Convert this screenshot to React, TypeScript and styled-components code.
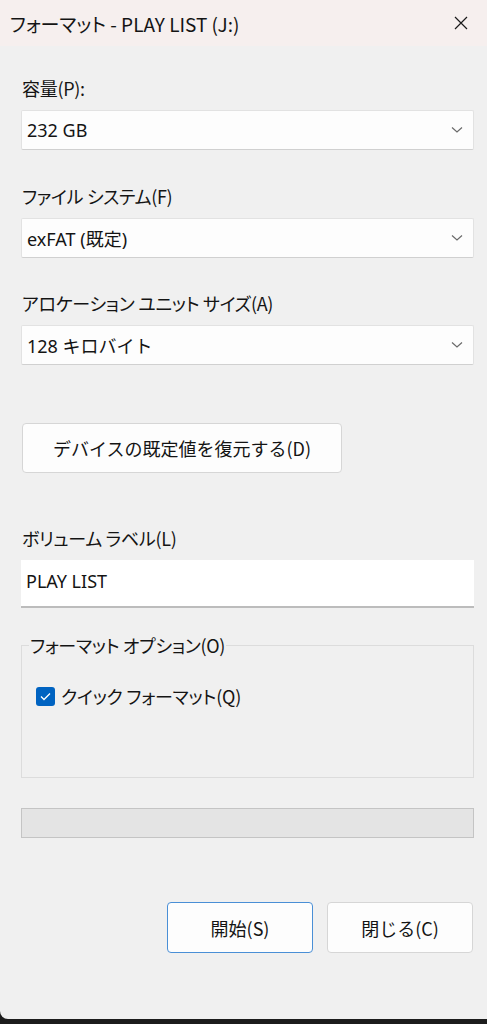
import React from "react";
import styled, { createGlobalStyle } from "styled-components";

const Global = createGlobalStyle`
  html, body { margin: 0; padding: 0; background: #1c1c1c; }
  body { font-family: "Noto Sans", "Noto Sans CJK JP", sans-serif; }
  * { box-sizing: border-box; }
`;

const Window = styled.div`
  width: 487px;
  height: 1019px;
  background: #f0f0f0;
  border-bottom-left-radius: 8px;
  display: flex;
  flex-direction: column;
  color: #141414;
  font-size: 18px;
`;

const TitleBar = styled.div`
  height: 46px;
  background: #f6efee;
  display: flex;
  align-items: center;
  justify-content: space-between;
  padding: 0 19px 0 10px;
`;

const Title = styled.span`
  font-family: "Noto Sans CJK JP", sans-serif;
  font-feature-settings: "palt";
  font-size: 19px;
`;

const Content = styled.div`
  display: flex;
  flex-direction: column;
  padding: 0 13px 0 21px;
`;

const Label = styled.div<{ $top: number }>`
  margin-top: ${(p) => p.$top}px;
  line-height: 24px;
  height: 24px;
  padding-left: 1px;
  font-family: "Noto Sans CJK JP", sans-serif;
  font-feature-settings: "palt";
  letter-spacing: -0.3px;
`;

const Select = styled.div`
  margin-top: 10px;
  height: 40px;
  background: #fdfdfd;
  border: 1px solid #e2e2e2;
  border-bottom-color: #d0d0d0;
  border-radius: 2px;
  display: flex;
  align-items: center;
  justify-content: space-between;
  padding: 0 10px 0 5px;
  font-family: "Noto Sans", "Noto Sans CJK JP", sans-serif;
`;

const Chevron = () => (
  <svg width="12" height="8" viewBox="0 0 12 8">
    <path d="M1 1.5 L6 6 L11 1.5" fill="none" stroke="#6a6a6a" strokeWidth="1.2" />
  </svg>
);

const Button = styled.button<{ $primary?: boolean; $width: number }>`
  width: ${(p) => p.$width}px;
  height: 50px;
  background: #fdfdfd;
  border: 1px solid ${(p) => (p.$primary ? "#4a8fd6" : "#d6d6d6")};
  border-radius: 4px;
  font-family: "Noto Sans CJK JP", sans-serif;
  font-size: 18px;
  color: #141414;
  padding: 0;
`;

const RestoreButton = styled(Button)`
  margin-top: 58px;
  margin-left: 1px;
`;

const TextInput = styled.div`
  margin-top: 10px;
  height: 48px;
  background: #ffffff;
  border-bottom: 2px solid #bcbcbc;
  display: flex;
  align-items: center;
  padding: 0 0 4px 5px;
`;

const GroupBox = styled.fieldset`
  margin: 25px 0 0 0;
  height: 145px;
  border: 1px solid #dcdcdc;
  padding: 0 0 0 14px;
  min-width: 0;
`;

const Legend = styled.legend`
  padding: 0 1px;
  margin-left: -7px;
  font-family: "Noto Sans CJK JP", sans-serif;
  font-feature-settings: "palt";
  letter-spacing: -0.3px;
  line-height: 24px;
`;

const CheckRow = styled.label`
  margin-top: 27px;
  line-height: 24px;
  display: flex;
  align-items: center;
  gap: 6px;
  font-family: "Noto Sans CJK JP", sans-serif;
  font-feature-settings: "palt";
  letter-spacing: -0.2px;
`;

const Box = styled.span`
  width: 19px;
  height: 19px;
  border-radius: 3px;
  background: #0063c1;
  display: flex;
  align-items: center;
  justify-content: center;
`;

const Progress = styled.div`
  margin-top: 30px;
  height: 30px;
  background: #e4e4e4;
  border: 1px solid #c4c4c4;
`;

const Footer = styled.div`
  margin-top: 64px;
  display: flex;
  justify-content: flex-end;
  gap: 14px;
  padding-right: 1px;
`;

const ActionButton = styled(Button)`
  height: 51px;
`;

export default function App() {
  return (
    <>
      <Global />
      <Window>
        <TitleBar>
          <Title>フォーマット - PLAY LIST (J:)</Title>
          <svg width="14" height="14" viewBox="0 0 14 14">
            <path d="M1 1 L13 13 M13 1 L1 13" stroke="#1a1a1a" strokeWidth="1.2" />
          </svg>
        </TitleBar>
        <Content>
          <Label $top={30}>容量(P):</Label>
          <Select>
            <span>232 GB</span>
            <Chevron />
          </Select>
          <Label $top={34}>ファイル システム(F)</Label>
          <Select>
            <span>exFAT (既定)</span>
            <Chevron />
          </Select>
          <Label $top={33}>アロケーション ユニット サイズ(A)</Label>
          <Select>
            <span>128 キロバイト</span>
            <Chevron />
          </Select>
          <RestoreButton $width={320}>デバイスの既定値を復元する(D)</RestoreButton>
          <Label $top={53}>ボリューム ラベル(L)</Label>
          <TextInput>PLAY LIST</TextInput>
          <GroupBox>
            <Legend>フォーマット オプション(O)</Legend>
            <CheckRow>
              <Box>
                <svg width="11" height="9" viewBox="0 0 11 9">
                  <path d="M1 4.5 L4 7.5 L10 1.5" fill="none" stroke="#ffffff" strokeWidth="1.3" />
                </svg>
              </Box>
              クイック フォーマット(Q)
            </CheckRow>
          </GroupBox>
          <Progress />
          <Footer>
            <ActionButton $primary $width={146}>開始(S)</ActionButton>
            <ActionButton $width={146}>閉じる(C)</ActionButton>
          </Footer>
        </Content>
      </Window>
    </>
  );
}
